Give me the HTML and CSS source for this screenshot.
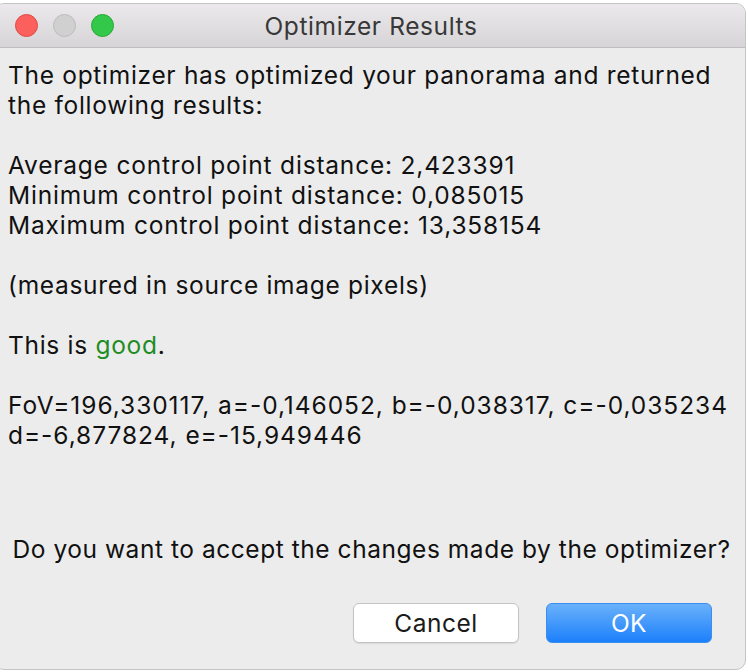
FILE: index.html
```html
<!DOCTYPE html>
<html>
<head>
<meta charset="utf-8">
<link rel="stylesheet" href="styles.css">
</head>
<body>
<div class="window">
  <div class="titlebar">
    <div class="lights">
      <span class="light red"></span>
      <span class="light gray"></span>
      <span class="light green"></span>
    </div>
    <div class="title">Optimizer Results</div>
  </div>
  <div class="content">
    <div class="message">
      <p>The optimizer has optimized your panorama and returned<br>the following results:</p>
      <p class="stats">Average control point distance: 2,423391<br>Minimum control point distance: 0,085015<br>Maximum control point distance: 13,358154</p>
      <p>(measured in source image pixels)</p>
      <p>This is <span class="good">good</span>.</p>
      <p class="params">FoV=196,330117, a=-0,146052, b=-0,038317, c=-0,035234<br>d=-6,877824, e=-15,949446</p>
    </div>
    <div class="question">Do you want to accept the changes made by the optimizer?</div>
    <div class="buttons">
      <button class="btn cancel">Cancel</button>
      <button class="btn ok">OK</button>
    </div>
  </div>
</div>
</body>
</html>
```
FILE: styles.css
```css
html, body {
  margin: 0;
  padding: 0;
  background: #ffffff;
}
body {
  width: 748px;
  height: 672px;
  overflow: hidden;
  font-family: Inter, "Liberation Sans", Arial, sans-serif;
}
.window {
  margin-top: 3px;
  margin-left: -6px;
  width: 752px;
  height: 667px;
  box-sizing: border-box;
  border: 1px solid #c4c4c4;
  border-radius: 10px;
  background: #ececec;
  overflow: hidden;
  display: flex;
  flex-direction: column;
}
.titlebar {
  height: 43px;
  flex: none;
  background: linear-gradient(#ebe9eb, #d6d4d6);
  border-bottom: 1px solid #bdbdbd;
  display: flex;
  align-items: center;
  position: relative;
}
.lights {
  display: flex;
  gap: 15px;
  margin-left: 20px;
}
.light {
  width: 23px;
  height: 23px;
  border-radius: 50%;
  box-sizing: border-box;
}
.red { background: #fc605c; border: 1px solid #de4a45; }
.gray { background: #d0d0d0; border: 1px solid #bcbcbc; }
.green { background: #34c84a; border: 1px solid #26a936; }
.title {
  position: absolute;
  left: 0;
  right: 0;
  top: 0;
  bottom: 0;
  display: flex;
  align-items: center;
  justify-content: center;
  font-size: 24.5px;
  letter-spacing: 0.6px;
  color: #383838;
  padding-left: 2px;
}
.content {
  flex: 1;
  display: flex;
  flex-direction: column;
  padding: 12px 0 0 13px;
  color: #111;
  font-size: 24.5px;
  letter-spacing: 0.7px;
  line-height: 30px;
}
.message p {
  margin: 0 0 30px 0;
  white-space: nowrap;
}
.message p:last-child { margin-bottom: 0; }
.stats { letter-spacing: 0.8px; }
.params { letter-spacing: 0.95px; }
.good { color: #1f8d25; }
.question {
  margin-top: 84px;
  text-align: center;
  width: 727px;
  letter-spacing: 0.55px;
  white-space: nowrap;
}
.buttons {
  display: flex;
  gap: 27px;
  margin-top: 39px;
  margin-left: 345px;
}
.btn {
  width: 166px;
  height: 40px;
  border-radius: 6px;
  font-family: Inter, "Liberation Sans", Arial, sans-serif;
  font-size: 24.5px;
  letter-spacing: 0.5px;
  padding: 0;
}
.cancel {
  background: #ffffff;
  border: 1px solid #c3c3c3;
  color: #1a1a1a;
  box-shadow: 0 1px 1px rgba(0,0,0,0.08);
}
.ok {
  background: linear-gradient(#6ab1fb, #1c80fb);
  border: 1px solid #3a8ef0;
  color: #ffffff;
}
```
